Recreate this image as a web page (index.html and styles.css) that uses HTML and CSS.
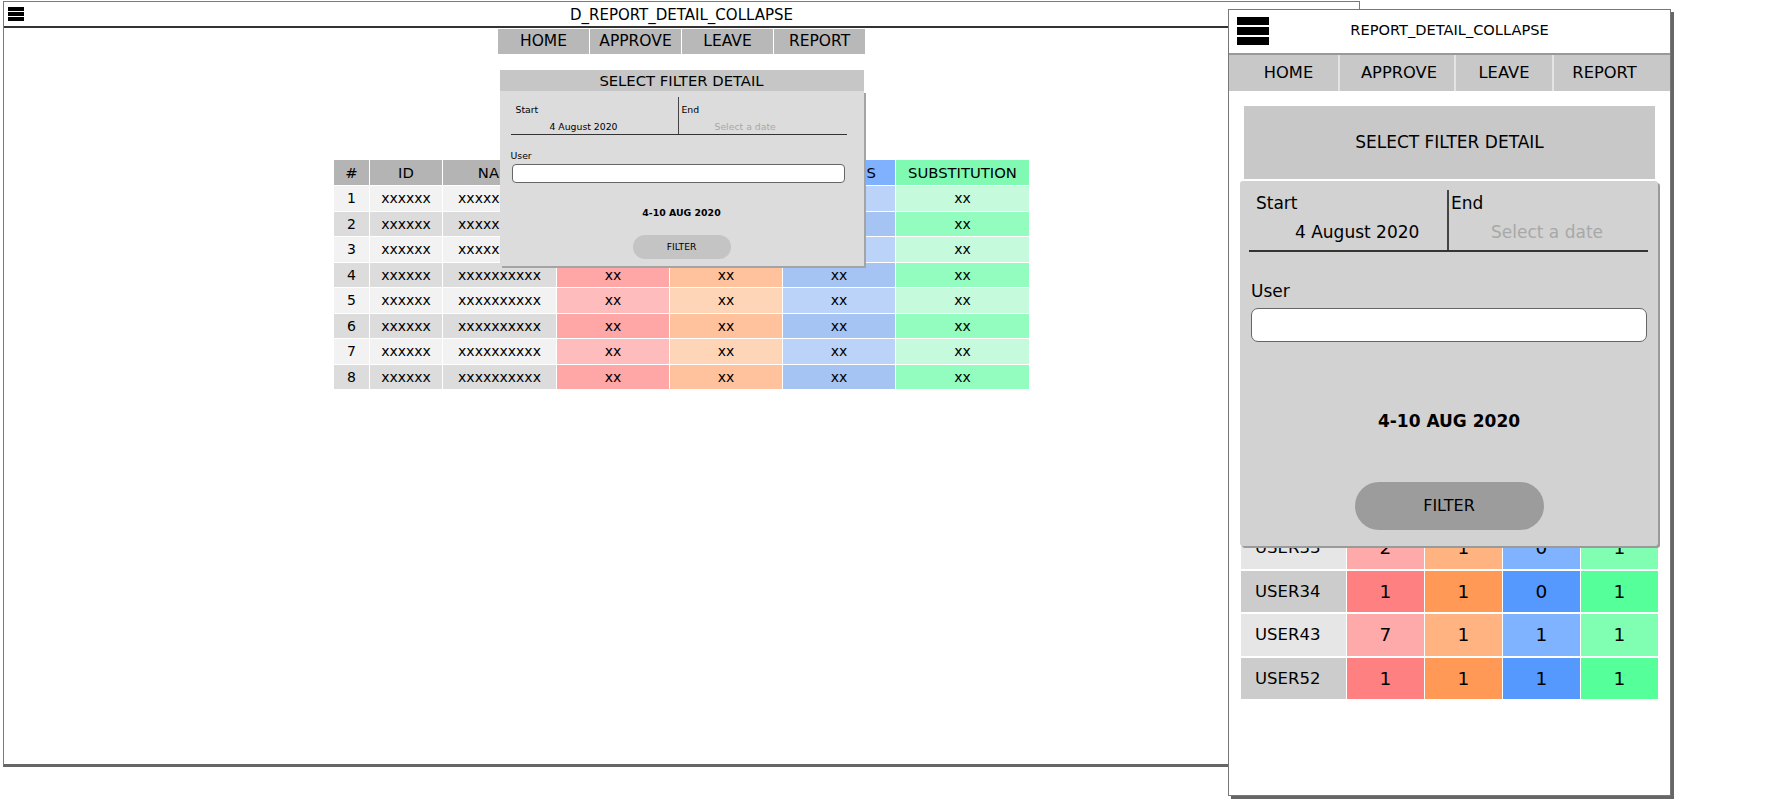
FILE: index.html
```html
<!DOCTYPE html>
<html>
<head>
<meta charset="utf-8">
<link rel="stylesheet" href="styles.css">
</head>
<body>
<div class="canvas">
  <section class="desk">
    <header class="desk-head">
      <div class="burger-cell"><span class="burger small"><i></i><i></i><i></i></span></div>
      <div class="desk-title">D_REPORT_DETAIL_COLLAPSE</div>
      <div></div>
    </header>
    <nav class="desk-nav">
      <div class="dn-item">HOME</div>
      <div class="dn-item">APPROVE</div>
      <div class="dn-item">LEAVE</div>
      <div class="dn-item">REPORT</div>
    </nav>
    <div class="desk-filter">
      <div class="desk-filter-title">SELECT FILTER DETAIL</div>
      <div class="desk-filter-body">
        <div class="d-dates">
          <div class="d-col d-start">
            <div class="d-lab">Start</div>
            <div class="d-val d-val-start">4 August 2020</div>
          </div>
          <div class="d-col d-end">
            <div class="d-lab">End</div>
            <div class="d-val d-val-end placeholder">Select a date</div>
          </div>
        </div>
        <div class="d-user">User</div>
        <div class="d-input"></div>
        <div class="d-range">4-10 AUG 2020</div>
        <div class="d-btn">FILTER</div>
      </div>
    </div>
    <div class="desk-table">
      <div class="row head">
        <div class="cell g">#</div><div class="cell g">ID</div><div class="cell g">NAME</div>
        <div class="cell r">ABSENT</div><div class="cell o">LATE</div><div class="cell b">BUSINESS</div><div class="cell s">SUBSTITUTION</div>
      </div>
      <div class="row odd">
        <div class="cell g">1</div><div class="cell g">xxxxxx</div><div class="cell g">xxxxxxxxxx</div>
        <div class="cell r">xx</div><div class="cell o">xx</div><div class="cell b">xx</div><div class="cell s">xx</div>
      </div>
      <div class="row even">
        <div class="cell g">2</div><div class="cell g">xxxxxx</div><div class="cell g">xxxxxxxxxx</div>
        <div class="cell r">xx</div><div class="cell o">xx</div><div class="cell b">xx</div><div class="cell s">xx</div>
      </div>
      <div class="row odd">
        <div class="cell g">3</div><div class="cell g">xxxxxx</div><div class="cell g">xxxxxxxxxx</div>
        <div class="cell r">xx</div><div class="cell o">xx</div><div class="cell b">xx</div><div class="cell s">xx</div>
      </div>
      <div class="row even">
        <div class="cell g">4</div><div class="cell g">xxxxxx</div><div class="cell g">xxxxxxxxxx</div>
        <div class="cell r">xx</div><div class="cell o">xx</div><div class="cell b">xx</div><div class="cell s">xx</div>
      </div>
      <div class="row odd">
        <div class="cell g">5</div><div class="cell g">xxxxxx</div><div class="cell g">xxxxxxxxxx</div>
        <div class="cell r">xx</div><div class="cell o">xx</div><div class="cell b">xx</div><div class="cell s">xx</div>
      </div>
      <div class="row even">
        <div class="cell g">6</div><div class="cell g">xxxxxx</div><div class="cell g">xxxxxxxxxx</div>
        <div class="cell r">xx</div><div class="cell o">xx</div><div class="cell b">xx</div><div class="cell s">xx</div>
      </div>
      <div class="row odd">
        <div class="cell g">7</div><div class="cell g">xxxxxx</div><div class="cell g">xxxxxxxxxx</div>
        <div class="cell r">xx</div><div class="cell o">xx</div><div class="cell b">xx</div><div class="cell s">xx</div>
      </div>
      <div class="row even">
        <div class="cell g">8</div><div class="cell g">xxxxxx</div><div class="cell g">xxxxxxxxxx</div>
        <div class="cell r">xx</div><div class="cell o">xx</div><div class="cell b">xx</div><div class="cell s">xx</div>
      </div>
    </div>
  </section>

  <section class="phone">
    <header class="phone-head">
      <div class="burger-cell p"><span class="burger big"><i></i><i></i><i></i></span></div>
      <div class="phone-title">REPORT_DETAIL_COLLAPSE</div>
      <div></div>
    </header>
    <nav class="phone-nav">
      <div class="pn-item pn-home">HOME</div>
      <div class="pn-item pn-approve">APPROVE</div>
      <div class="pn-item">LEAVE</div>
      <div class="pn-item pn-report">REPORT</div>
    </nav>
    <div class="phone-filter">
      <div class="phone-filter-title">SELECT FILTER DETAIL</div>
      <div class="phone-filter-body">
        <div class="p-dates">
          <div class="p-col p-start">
            <div class="p-lab">Start</div>
            <div class="p-val p-val-start">4 August 2020</div>
          </div>
          <div class="p-col p-end">
            <div class="p-lab">End</div>
            <div class="p-val p-val-end placeholder">Select a date</div>
          </div>
        </div>
        <div class="p-user">User</div>
        <div class="p-input"></div>
        <div class="p-range">4-10 AUG 2020</div>
        <div class="p-btn">FILTER</div>
      </div>
    </div>
    <div class="phone-table">
      <div class="prow dk"><div class="pc n">USER</div><div class="pc r">A</div><div class="pc o">L</div><div class="pc b">B</div><div class="pc s">S</div></div>
      <div class="prow lt"><div class="pc n">USER02</div><div class="pc r">0</div><div class="pc o">1</div><div class="pc b">0</div><div class="pc s">1</div></div>
      <div class="prow dk"><div class="pc n">USER05</div><div class="pc r">1</div><div class="pc o">0</div><div class="pc b">1</div><div class="pc s">0</div></div>
      <div class="prow lt"><div class="pc n">USER11</div><div class="pc r">2</div><div class="pc o">1</div><div class="pc b">0</div><div class="pc s">1</div></div>
      <div class="prow dk"><div class="pc n">USER17</div><div class="pc r">1</div><div class="pc o">1</div><div class="pc b">1</div><div class="pc s">0</div></div>
      <div class="prow lt"><div class="pc n">USER21</div><div class="pc r">0</div><div class="pc o">2</div><div class="pc b">0</div><div class="pc s">1</div></div>
      <div class="prow dk"><div class="pc n">USER28</div><div class="pc r">3</div><div class="pc o">1</div><div class="pc b">1</div><div class="pc s">1</div></div>
      <div class="prow lt"><div class="pc n">USER33</div><div class="pc r">2</div><div class="pc o">1</div><div class="pc b">0</div><div class="pc s">1</div></div>
      <div class="prow dk"><div class="pc n">USER34</div><div class="pc r">1</div><div class="pc o">1</div><div class="pc b">0</div><div class="pc s">1</div></div>
      <div class="prow lt"><div class="pc n">USER43</div><div class="pc r">7</div><div class="pc o">1</div><div class="pc b">1</div><div class="pc s">1</div></div>
      <div class="prow dk"><div class="pc n">USER52</div><div class="pc r">1</div><div class="pc o">1</div><div class="pc b">1</div><div class="pc s">1</div></div>
    </div>
  </section>
</div>
</body>
</html>
```

FILE: styles.css
```css
html, body {
  margin: 0;
  padding: 0;
  background: #fff;
}
body {
  font-family: "DejaVu Sans", Verdana, sans-serif;
  color: #000;
}
.canvas {
  position: relative;
  width: 1792px;
  height: 801px;
  overflow: hidden;
}

/* ---------- hamburger ---------- */
.burger {
  display: flex;
  flex-direction: column;
}
.burger i {
  display: block;
  background: #000;
}
.burger.small { width: 16px; gap: 1px; }
.burger.small i { height: 4px; }
.burger.big { width: 32px; gap: 2px; }
.burger.big i { height: 8px; }

/* ---------- desktop window ---------- */
.desk {
  position: absolute;
  left: 3px;
  top: 1px;
  width: 1357px;
  height: 766px;
  box-sizing: border-box;
  border: 1px solid #7a7a7a;
  border-bottom: 3px solid #666;
  display: flex;
  flex-direction: column;
  align-items: center;
}
.desk-head {
  align-self: stretch;
  height: 24px;
  border-bottom: 2px solid #333;
  display: grid;
  grid-template-columns: 1fr auto 1fr;
  align-items: center;
}
.burger-cell {
  padding-left: 4px;
  align-self: start;
  padding-top: 5px;
}
.desk-title {
  font-size: 15px;
  line-height: 24px;
  padding-top: 1px;
}
.desk-nav {
  margin-top: 1px;
  display: flex;
  gap: 1px;
  background: #fff;
}
.dn-item {
  width: 91px;
  height: 25px;
  line-height: 25px;
  text-align: center;
  background: #b8b8b8;
  font-size: 15.5px;
}
.desk-filter {
  margin-top: 16px;
  width: 364px;
  position: relative;
  z-index: 2;
}
.desk-filter-title {
  height: 21px;
  line-height: 21px;
  background: #c6c6c6;
  text-align: center;
  font-size: 14.8px;
}
.desk-filter-body {
  position: absolute;
  top: 100%;
  left: 0;
  width: 364px;
  height: 175px;
  box-sizing: border-box;
  padding: 6px 11px 7px 11px;
  background: #dcdcdc;
  box-shadow: 2px 2px 0 #a4a4a4;
  display: flex;
  flex-direction: column;
}
.d-dates {
  margin-right: 6px;
  height: 38px;
  box-sizing: border-box;
  border-bottom: 1.5px solid #333;
  display: grid;
  grid-template-columns: 168px 1fr;
}
.d-col { padding-top: 6px; }
.d-start { border-right: 1.5px solid #444; }
.d-lab {
  font-size: 9.3px;
  line-height: 14px;
  padding-left: 5px;
}
.d-end .d-lab { padding-left: 3px; }
.d-val {
  font-size: 9.3px;
  line-height: 14px;
  margin-top: 3px;
}
.d-val-start { padding-left: 39px; }
.d-val-end { padding-left: 36px; }
.placeholder { color: #a8a8a8; }
.d-user {
  margin-top: 14px;
  font-size: 9.3px;
  line-height: 14px;
}
.d-input {
  margin: 1px 8px 0 1px;
  height: 19px;
  box-sizing: border-box;
  border: 1px solid #666;
  border-radius: 4px;
  background: #fff;
}
.d-range {
  margin-top: 24px;
  font-size: 9.4px;
  line-height: 12px;
  font-weight: bold;
  text-align: center;
}
.d-btn {
  margin-top: 16px;
  align-self: center;
  width: 98px;
  height: 24px;
  line-height: 24px;
  border-radius: 12px;
  background: #c4c4c4;
  text-align: center;
  font-size: 9.2px;
}

.desk-table {
  margin-top: 69px;
  display: grid;
  grid-template-columns: 35px 72px 113px 112px 112px 112px 133px;
  grid-template-rows: 25px repeat(8, 24.5px);
  column-gap: 1px;
  row-gap: 1px;
}
.row { display: contents; }
.cell {
  display: flex;
  align-items: center;
  justify-content: center;
  font-size: 14px;
}
.row.head .cell { font-size: 14.8px; }
.row.head .g { background: #b4b4b4; }
.row.head .r { background: #ff8080; }
.row.head .o { background: #ffa970; }
.row.head .b { background: #80b1ff; }
.row.head .s { background: #80f9b3; }
.row.odd .g { background: #f2f2f2; }
.row.even .g { background: #dcdcdc; }
.row.odd .r { background: #ffbcbc; }
.row.even .r { background: #ffa6a6; }
.row.odd .o { background: #ffd5b8; }
.row.even .o { background: #ffc29c; }
.row.odd .b { background: #bbd3f8; }
.row.even .b { background: #a5c4f4; }
.row.odd .s { background: #c5fadc; }
.row.even .s { background: #92fdbf; }

/* ---------- phone window ---------- */
.phone {
  position: absolute;
  left: 1228px;
  top: 9px;
  width: 443px;
  height: 787px;
  box-sizing: border-box;
  border: 1px solid #777;
  box-shadow: 3px 3px 0 #666;
  background: #fff;
  z-index: 5;
}
.phone-head {
  height: 43px;
  border-bottom: 2px solid #999;
  display: grid;
  grid-template-columns: 1fr auto 1fr;
  align-items: center;
}
.burger-cell.p {
  padding-left: 8px;
  padding-top: 7px;
}
.phone-title {
  font-size: 14.6px;
  line-height: 20px;
  padding-bottom: 4px;
}
.phone-nav {
  display: grid;
  grid-template-columns: 109px 114px 96px 116px;
  column-gap: 2px;
  background: #e4e4e4;
}
.pn-item {
  height: 36px;
  line-height: 36px;
  text-align: center;
  background: #c8c8c8;
  font-size: 16.3px;
}
.pn-item.pn-home { padding-left: 10px; }
.pn-item.pn-approve { padding-left: 4px; }
.pn-item.pn-report { padding-right: 15px; }
.phone-filter {
  margin: 15px 15px 0 15px;
  position: relative;
  z-index: 2;
}
.phone-filter-title {
  height: 73px;
  line-height: 73px;
  background: #c8c8c8;
  text-align: center;
  font-size: 17px;
}
.phone-filter-body {
  position: absolute;
  top: calc(100% + 2px);
  left: -4px;
  width: 418px;
  height: 365px;
  box-sizing: border-box;
  padding: 9px 9px 16px 9px;
  background: #d2d2d2;
  border-radius: 3px;
  box-shadow: 2px 2px 0 #9a9a9a;
  display: flex;
  flex-direction: column;
}
.p-dates {
  margin-right: 1px;
  height: 62px;
  box-sizing: border-box;
  border-bottom: 2px solid #333;
  display: grid;
  grid-template-columns: 200px 1fr;
}
.p-col { padding-top: 4px; }
.p-start { border-right: 2px solid #444; }
.p-lab {
  font-size: 17px;
  line-height: 18px;
  padding-left: 7px;
}
.p-end .p-lab { padding-left: 2px; }
.p-val {
  font-size: 17px;
  line-height: 20px;
  margin-top: 10px;
}
.p-val-start { padding-left: 46px; }
.p-val-end { padding-left: 42px; }
.p-user {
  margin-top: 29px;
  padding-left: 2px;
  font-size: 17px;
  line-height: 20px;
}
.p-input {
  margin: 7px 2px 0 2px;
  height: 34px;
  box-sizing: border-box;
  border: 1.5px solid #666;
  border-radius: 7px;
  background: #fff;
}
.p-range {
  margin-top: 69px;
  font-size: 17px;
  line-height: 20px;
  font-weight: bold;
  text-align: center;
}
.p-btn {
  margin-top: 51px;
  align-self: center;
  width: 189px;
  height: 48px;
  line-height: 48px;
  border-radius: 24px;
  background: #9c9c9c;
  text-align: center;
  font-size: 16px;
}
.phone-table {
  margin: 43.5px 12px 0 12px;
  display: grid;
  grid-template-columns: 105px 77px 77px 77px 77px;
  grid-auto-rows: 41.5px;
  column-gap: 1px;
  row-gap: 2px;
}
.prow { display: contents; }
.pc {
  display: flex;
  align-items: center;
  justify-content: center;
  font-size: 18.5px;
}
.pc.n {
  justify-content: flex-start;
  padding-left: 14px;
  font-size: 16.5px;
}
.prow.dk .n { background: #cccccc; }
.prow.lt .n { background: #e6e6e6; }
.prow.dk .r { background: #ff8080; }
.prow.lt .r { background: #ffaaaa; }
.prow.dk .o { background: #ff9955; }
.prow.lt .o { background: #ffb380; }
.prow.dk .b { background: #5599ff; }
.prow.lt .b { background: #80b3ff; }
.prow.dk .s { background: #55ff99; }
.prow.lt .s { background: #80ffb3; }
```
